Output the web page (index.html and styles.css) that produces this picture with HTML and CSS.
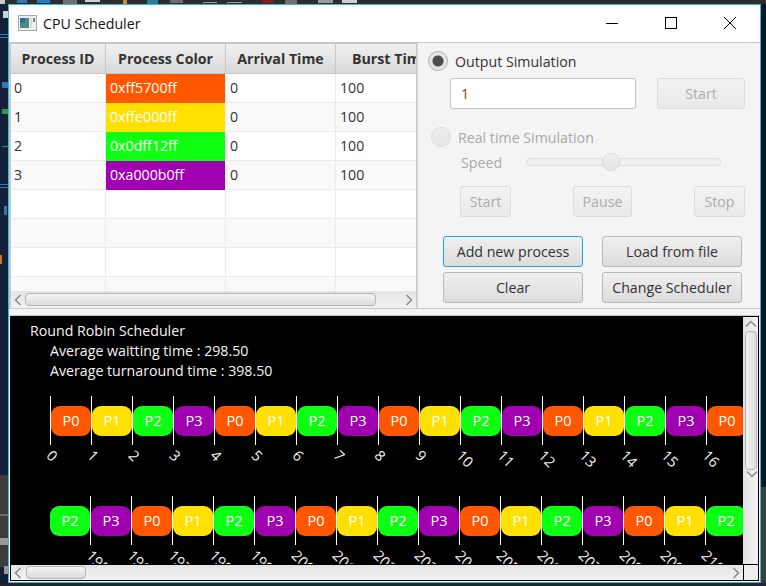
FILE: index.html
```html
<!doctype html>
<html lang="en">
  <head>
    <meta charset="UTF-8" />
    <title>CPU Scheduler</title>
    <link rel="stylesheet" href="styles.css">
  </head>

  <body>
    <!-- Desktop behind the window -->
    <svg class="desk-top" width="766" height="4" viewBox="0 0 766 4">
      <rect x="0" y="0" width="5" height="4" fill="#c8c8c8" />
      <rect x="17" y="0" width="10" height="3" fill="#2c78b8" />
      <rect x="37" y="0" width="13" height="3" fill="#2c78b8" />
      <rect x="63" y="0" width="14" height="4" fill="#6e6e6e" />
      <rect x="85" y="0" width="15" height="2" fill="#d0d0d0" />
      <rect x="123" y="0" width="4" height="4" fill="#c98a2a" />
      <rect x="147" y="0" width="11" height="4" fill="#2a7f96" />
      <rect x="170" y="0" width="13" height="3" fill="#6e6e6e" />
      <rect x="203" y="2" width="14" height="1" fill="#9a9a9a" />
      <rect x="227" y="2" width="15" height="1" fill="#9a9a9a" />
      <rect x="262" y="0" width="11" height="3" fill="#8c1c1c" />
      <rect x="285" y="0" width="12" height="4" fill="#6e6e6e" />
      <rect x="318" y="0" width="15" height="3" fill="#9a9a9a" />
      <rect x="342" y="0" width="15" height="3" fill="#d0d0d0" />
    </svg>

    <div class="desk-middle">
      <svg class="desk-left" width="8" height="579" viewBox="0 0 8 579">
        <rect x="3" y="7" width="5" height="7" fill="#d0d0d0" />
        <rect x="0" y="30" width="8" height="1" fill="#2c78b8" />
        <rect x="0" y="33" width="8" height="1" fill="#2c78b8" />
        <rect x="2" y="78" width="6" height="6" fill="#2c78b8" />
        <rect x="2" y="105" width="6" height="5" fill="#2f9a4a" />
        <rect x="2" y="142" width="6" height="1" fill="#2f9a4a" />
        <rect x="0" y="180" width="8" height="1" fill="#2c78b8" />
        <rect x="0" y="183" width="8" height="1" fill="#2c78b8" />
        <rect x="4" y="202" width="3" height="9" fill="#2c78b8" />
        <rect x="0" y="251" width="2" height="9" fill="#c87a2a" />
        <rect x="0" y="510" width="8" height="2" fill="#6a6a6a" />
        <rect x="0" y="534" width="8" height="7" fill="#9a9a9a" />
        <rect x="4" y="562" width="4" height="8" fill="#9a9a9a" />
      </svg>

      <div class="window">
        <div class="titlebar">
          <svg class="app-icon" width="19" height="16" viewBox="0 0 19 16">
            <rect x="0.5" y="0.5" width="18" height="15" fill="#eeeeee" stroke="#a9a9a9" />
            <rect x="2" y="3" width="9" height="10" fill="#4d8a86" />
            <rect x="2" y="3" width="5" height="5" fill="#2f6f9a" />
            <rect x="12" y="3" width="2" height="10" fill="#d4dedb" />
            <rect x="15" y="3" width="2" height="4" fill="#5f8a80" />
          </svg>
          <span class="window-title">CPU Scheduler</span>
          <div class="window-controls">
            <svg width="14" height="14" viewBox="0 0 14 14">
              <path d="M1 7.5H13" stroke="#000" fill="none" />
            </svg>
            <svg width="14" height="14" viewBox="0 0 14 14">
              <rect x="1.5" y="1.5" width="11" height="11" stroke="#000" fill="none" />
            </svg>
            <svg width="14" height="14" viewBox="0 0 14 14">
              <path d="M1 1L13 13M13 1L1 13" stroke="#000" fill="none" />
            </svg>
          </div>
        </div>

        <div class="main">
          <!-- Process table -->
          <div class="table-pane">
            <div class="table-clip">
              <table class="process-table">
                <thead>
                  <tr>
                    <th class="col-id">Process ID</th>
                    <th class="col-color">Process Color</th>
                    <th class="col-time">Arrival Time</th>
                    <th class="col-time">Burst Time</th>
                  </tr>
                </thead>
                <tbody>
                  <tr><td>0</td><td class="c-orange">0xff5700ff</td><td>0</td><td>100</td></tr>
                  <tr><td>1</td><td class="c-yellow">0xffe000ff</td><td>0</td><td>100</td></tr>
                  <tr><td>2</td><td class="c-green">0x0dff12ff</td><td>0</td><td>100</td></tr>
                  <tr><td>3</td><td class="c-purple">0xa000b0ff</td><td>0</td><td>100</td></tr>
                  <tr><td></td><td></td><td></td><td></td></tr>
                  <tr><td></td><td></td><td></td><td></td></tr>
                  <tr><td></td><td></td><td></td><td></td></tr>
                  <tr><td></td><td></td><td></td><td></td></tr>
                </tbody>
              </table>
            </div>
            <div class="hbar table-hbar">
              <svg class="arrow" width="8" height="12" viewBox="0 0 8 12">
                <path d="M6.5 1L1.5 6L6.5 11" />
              </svg>
              <div class="hthumb table-hthumb"></div>
              <svg class="arrow arrow-end" width="8" height="12" viewBox="0 0 8 12">
                <path d="M1.5 1L6.5 6L1.5 11" />
              </svg>
            </div>
          </div>

          <!-- Simulation controls -->
          <div class="controls">
            <div class="radio-row">
              <span class="radio radio-on"></span>
              <label>Output Simulation</label>
            </div>
            <div class="output-row">
              <input class="text-field" type="text" value="1" />
              <button class="btn btn-off btn-start-output" disabled>Start</button>
            </div>
            <div class="radio-row radio-row-off">
              <span class="radio"></span>
              <label>Real time Simulation</label>
            </div>
            <div class="speed-row">
              <label>Speed</label>
              <div class="slider"><span class="slider-thumb"></span></div>
            </div>
            <div class="run-row">
              <button class="btn btn-off btn-start">Start</button>
              <button class="btn btn-off btn-pause">Pause</button>
              <button class="btn btn-off btn-start">Stop</button>
            </div>
            <div class="action-grid">
              <button class="btn btn-focus">Add new process</button>
              <button class="btn">Load from file</button>
              <button class="btn">Clear</button>
              <button class="btn">Change Scheduler</button>
            </div>
          </div>
        </div>

        <div class="sash"></div>

        <!-- Output -->
        <div class="output-pane">
          <div class="output-top">
            <div class="output-view">
              <div class="summary">
                <div>Round Robin Scheduler</div>
                <div class="summary-line">Average waitting time : 298.50</div>
                <div class="summary-line">Average turnaround time : 398.50</div>
              </div>

              <div class="lane lane-first">
                <div class="tick"><span class="tick-num">0</span></div>
                <div class="pill c-orange">P0</div><div class="tick"><span class="tick-num">1</span></div>
                <div class="pill c-yellow">P1</div><div class="tick"><span class="tick-num">2</span></div>
                <div class="pill c-green">P2</div><div class="tick"><span class="tick-num">3</span></div>
                <div class="pill c-purple">P3</div><div class="tick"><span class="tick-num">4</span></div>
                <div class="pill c-orange">P0</div><div class="tick"><span class="tick-num">5</span></div>
                <div class="pill c-yellow">P1</div><div class="tick"><span class="tick-num">6</span></div>
                <div class="pill c-green">P2</div><div class="tick"><span class="tick-num">7</span></div>
                <div class="pill c-purple">P3</div><div class="tick"><span class="tick-num">8</span></div>
                <div class="pill c-orange">P0</div><div class="tick"><span class="tick-num">9</span></div>
                <div class="pill c-yellow">P1</div><div class="tick"><span class="tick-num">10</span></div>
                <div class="pill c-green">P2</div><div class="tick"><span class="tick-num">11</span></div>
                <div class="pill c-purple">P3</div><div class="tick"><span class="tick-num">12</span></div>
                <div class="pill c-orange">P0</div><div class="tick"><span class="tick-num">13</span></div>
                <div class="pill c-yellow">P1</div><div class="tick"><span class="tick-num">14</span></div>
                <div class="pill c-green">P2</div><div class="tick"><span class="tick-num">15</span></div>
                <div class="pill c-purple">P3</div><div class="tick"><span class="tick-num">16</span></div>
                <div class="pill c-orange">P0</div>
              </div>

              <div class="lane lane-second">
                <div class="pill c-green">P2</div><div class="tick"><span class="tick-num">195</span></div>
                <div class="pill c-purple">P3</div><div class="tick"><span class="tick-num">196</span></div>
                <div class="pill c-orange">P0</div><div class="tick"><span class="tick-num">197</span></div>
                <div class="pill c-yellow">P1</div><div class="tick"><span class="tick-num">198</span></div>
                <div class="pill c-green">P2</div><div class="tick"><span class="tick-num">199</span></div>
                <div class="pill c-purple">P3</div><div class="tick"><span class="tick-num">200</span></div>
                <div class="pill c-orange">P0</div><div class="tick"><span class="tick-num">201</span></div>
                <div class="pill c-yellow">P1</div><div class="tick"><span class="tick-num">202</span></div>
                <div class="pill c-green">P2</div><div class="tick"><span class="tick-num">203</span></div>
                <div class="pill c-purple">P3</div><div class="tick"><span class="tick-num">204</span></div>
                <div class="pill c-orange">P0</div><div class="tick"><span class="tick-num">205</span></div>
                <div class="pill c-yellow">P1</div><div class="tick"><span class="tick-num">206</span></div>
                <div class="pill c-green">P2</div><div class="tick"><span class="tick-num">207</span></div>
                <div class="pill c-purple">P3</div><div class="tick"><span class="tick-num">208</span></div>
                <div class="pill c-orange">P0</div><div class="tick"><span class="tick-num">209</span></div>
                <div class="pill c-yellow">P1</div><div class="tick"><span class="tick-num">210</span></div>
                <div class="pill c-green">P2</div>
              </div>
            </div>

            <div class="vbar">
              <svg class="arrow" width="12" height="8" viewBox="0 0 12 8">
                <path d="M1 6.5L6 1.5L11 6.5" />
              </svg>
              <div class="vthumb"></div>
              <svg class="arrow arrow-end" width="12" height="8" viewBox="0 0 12 8">
                <path d="M1 1.5L6 6.5L11 1.5" />
              </svg>
            </div>
          </div>

          <div class="output-bottom">
            <div class="hbar output-hbar">
              <svg class="arrow" width="8" height="12" viewBox="0 0 8 12">
                <path d="M6.5 1L1.5 6L6.5 11" />
              </svg>
              <div class="hthumb output-hthumb"></div>
              <svg class="arrow arrow-end" width="8" height="12" viewBox="0 0 8 12">
                <path d="M1.5 1L6.5 6L1.5 11" />
              </svg>
            </div>
            <div class="corner"></div>
          </div>
        </div>
      </div>

      <div class="desk-right"></div>
    </div>

    <div class="desk-bottom"></div>
  </body>
</html>
```

FILE: styles.css
```css
* {
  box-sizing: border-box;
}

html,
body {
  margin: 0;
  height: 586px;
  overflow: hidden;
}

body {
  font-family: "Open Sans", "Noto Sans", sans-serif;
  font-size: 14.2px;
  color: #333333;
  background-color: #2b2b2b;
}

/* Desktop behind the window */
.desk-top {
  display: block;
  background-color: #2d2d2d;
}

.desk-middle {
  display: flex;
  height: 579px;
}

.desk-left {
  display: block;
  flex-shrink: 0;
  background: linear-gradient(#12203a 0, #12203a 471px, #3c3c3c 471px, #3c3c3c 563px, #12203a 563px);
}

.desk-right {
  width: 5px;
  background: linear-gradient(#0e1626 0, #0e1626 483px, #3c3c3c 483px);
}

.desk-bottom {
  height: 3px;
  background-color: #20242c;
}

/* Window */
.window {
  width: 753px;
  border: 1px solid #2ac0d8;
  background-color: #f4f4f4;
  display: flex;
  flex-direction: column;
}

.titlebar {
  display: flex;
  align-items: center;
  height: 38px;
  flex-shrink: 0;
  padding: 0 0 1px 9px;
  background-color: #ffffff;
  border-bottom: 1px solid #c8c8c8;
}

.app-icon {
  flex-shrink: 0;
}

.window-title {
  margin-left: 6px;
  color: #111111;
}

.window-controls {
  display: flex;
  margin-left: auto;
  margin-right: 23px;
  gap: 45px;
}

.main {
  display: flex;
  height: 266px;
  flex-shrink: 0;
  border-bottom: 1px solid #c8c8c8;
}

/* Process table */
.table-pane {
  width: 408px;
  flex-shrink: 0;
  background-color: #c8c8c8;
  padding: 1px 1px 0 2px;
  display: flex;
  flex-direction: column;
}

.table-clip {
  height: 247px;
  overflow: hidden;
  background-color: #ffffff;
}

.process-table {
  width: 435px;
  table-layout: fixed;
  border-collapse: separate;
  border-spacing: 0;
}

.process-table th {
  height: 30px;
  padding: 0;
  text-align: center;
  font-size: 14.2px;
  font-weight: bold;
  color: #333333;
  background: linear-gradient(#f0f0f0, #d9d9d9);
  border-right: 1px solid #c8c8c8;
  border-bottom: 1px solid #c8c8c8;
}

.col-id {
  width: 95px;
}

.col-color {
  width: 120px;
}

.col-time {
  width: 110px;
}

.process-table td {
  height: 29px;
  padding: 0 0 0 4px;
  border-right: 1px solid #ececec;
  border-bottom: 1px solid #ececec;
  line-height: 1;
}

.process-table td:first-child {
  padding-left: 3px;
}

.process-table tbody tr:nth-child(even) {
  background-color: #f9f9f9;
}

.process-table tbody tr:nth-child(even) td.c-yellow,
.process-table tbody tr:nth-child(even) td.c-purple {
  border-bottom: none;
}

.process-table td.c-orange,
.process-table td.c-yellow,
.process-table td.c-green,
.process-table td.c-purple {
  color: #ffffff;
  border-bottom: none;
}

.c-orange {
  background-color: #ff5700;
}

.c-yellow {
  background-color: #ffe000;
}

.c-green {
  background-color: #0dff12;
}

.c-purple {
  background-color: #a000b0;
}

/* Scrollbars */
.hbar {
  display: flex;
  align-items: center;
  background: linear-gradient(#e4e4e4, #f2f2f2);
  padding: 0 3px;
}

.table-hbar {
  height: 17px;
  flex-shrink: 0;
}

.arrow {
  flex-shrink: 0;
}

.arrow path {
  fill: none;
  stroke: #8a8a8a;
  stroke-width: 1.5;
}

.arrow-end {
  margin-left: auto;
}

.hthumb {
  height: 13px;
  border: 1px solid #b4b4b4;
  border-radius: 4px;
  background: linear-gradient(#f4f4f4, #dcdcdc);
}

.table-hthumb {
  width: 351px;
  margin-left: 3px;
}

.vbar {
  width: 15px;
  flex-shrink: 0;
  display: flex;
  flex-direction: column;
  align-items: center;
  padding: 3px 0;
  background: linear-gradient(90deg, #e4e4e4, #f2f2f2);
}

.vthumb {
  width: 12px;
  height: 139px;
  margin-top: 3px;
  border: 1px solid #b4b4b4;
  border-radius: 4px;
  background: linear-gradient(90deg, #f4f4f4, #dcdcdc);
}

/* Simulation controls */
.controls {
  flex: 1;
  padding: 8px 0 0 10px;
  border-left: 1px solid #d8d8d8;
}

.radio-row {
  display: flex;
  align-items: center;
  gap: 7px;
  height: 20px;
}

.radio-row label {
  color: #333333;
}

.radio-row-off {
  margin: 18px 0 0 3px;
}

.radio-row-off label,
.speed-row label {
  color: #a9a9a9;
}

.radio {
  width: 20px;
  height: 20px;
  border-radius: 50%;
  border: 1px solid #dcdcdc;
  background: linear-gradient(#ececec, #e6e6e6);
}

.radio-on {
  border-color: #b0b0b0;
  background: radial-gradient(circle, #4d4d4d 0, #4d4d4d 5px, #e4e4e4 6px);
}

.output-row {
  display: flex;
  margin: 7px 0 0 22px;
}

.text-field {
  width: 186px;
  height: 31px;
  padding: 0 10px;
  font-family: inherit;
  font-size: 14.2px;
  color: #7a4a20;
  background-color: #ffffff;
  border: 1px solid #c2c2c2;
  border-radius: 3px;
  outline: none;
}

.btn {
  height: 31px;
  padding: 0;
  font-family: inherit;
  font-size: 14.2px;
  color: #333333;
  border: 1px solid #b8b8b8;
  border-radius: 3px;
  background: linear-gradient(#f0f0f0, #dcdcdc);
}

.btn-off {
  color: #acacac;
  border-color: #dcdcdc;
  background: linear-gradient(#f3f3f3, #e9e9e9);
}

.btn-focus {
  border-color: #1ea6e2;
}

.btn-start-output {
  width: 88px;
  margin-left: 21px;
}

.speed-row {
  display: flex;
  align-items: center;
  height: 18px;
  margin: 6px 0 0 33px;
}

.speed-row label {
  width: 65px;
}

.slider {
  position: relative;
  width: 195px;
  height: 8px;
  border: 1px solid #e0e0e0;
  border-radius: 4px;
  background-color: #f0f0f0;
}

.slider-thumb {
  position: absolute;
  left: 75px;
  top: -6px;
  width: 18px;
  height: 18px;
  border-radius: 50%;
  border: 1px solid #d8d8d8;
  background: linear-gradient(#f0f0f0, #e4e4e4);
}

.run-row {
  display: flex;
  justify-content: space-between;
  width: 285px;
  margin: 15px 0 0 32px;
}

.btn-start {
  width: 51px;
}

.btn-pause {
  width: 59px;
}

.action-grid {
  display: grid;
  grid-template-columns: 140px 140px;
  column-gap: 19px;
  row-gap: 5px;
  margin: 19px 0 0 15px;
}

/* Output */
.sash {
  height: 7px;
  flex-shrink: 0;
  border-bottom: 1px solid #c8c8c8;
}

.output-pane {
  height: 265px;
  flex-shrink: 0;
  margin: 0 1px;
  border: 1px solid #000000;
  background-color: #000000;
  display: flex;
  flex-direction: column;
}

.output-top {
  display: flex;
  height: 247px;
  flex-shrink: 0;
}

.output-view {
  width: 732px;
  overflow: hidden;
  padding: 4px 0 0 19px;
  color: #f4f4f4;
}

.summary {
  line-height: 20px;
}

.summary-line {
  padding-left: 20px;
}

.lane {
  display: flex;
  margin-left: 20px;
  height: 49px;
}

.lane-first {
  margin-top: 15px;
}

.lane-second {
  margin-top: 51px;
}

.tick {
  position: relative;
  width: 1px;
  height: 49px;
  flex-shrink: 0;
  background-color: #ffffff;
}

.tick-num {
  position: absolute;
  left: -1px;
  top: 50px;
  line-height: 14px;
  font-size: 14.5px;
  color: #f4f4f4;
  transform: rotate(45deg);
  transform-origin: 0 50%;
}

.pill {
  width: 40px;
  height: 30px;
  flex-shrink: 0;
  margin-top: 10px;
  border-radius: 9px;
  color: #ffffff;
  text-align: center;
  line-height: 30px;
  font-size: 14.5px;
}

.output-bottom {
  display: flex;
  height: 16px;
  flex-shrink: 0;
  position: relative;
  z-index: 1;
}

.output-hbar {
  width: 732px;
  border-top: 1px solid #000000;
}

.output-hthumb {
  width: 60px;
  margin-left: 4px;
}

.corner {
  width: 15px;
  border-left: 1px solid #000000;
  border-top: 1px solid #000000;
  background-color: #eeeeee;
}
```
